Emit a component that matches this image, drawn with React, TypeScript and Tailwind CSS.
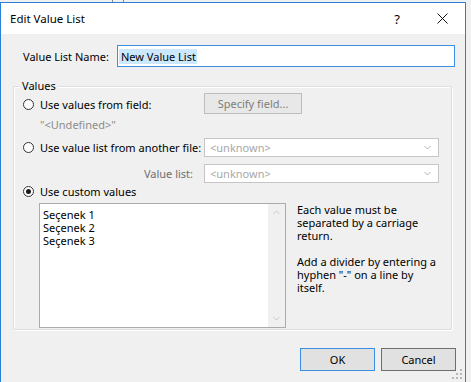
import React from 'react'

function Radio({ checked = false }: { checked?: boolean }) {
  return (
    <span className="w-[11px] h-[11px] rounded-full border border-[#333333] bg-white flex items-center justify-center shrink-0">
      {checked && <span className="w-[5px] h-[5px] rounded-full bg-[#1a1a1a]" />}
    </span>
  )
}

function Dropdown() {
  return (
    <div className="w-[235px] h-[19px] border border-[#c6c6c6] bg-white flex items-center justify-between pl-[5px] pr-[7px] text-[#a8a8a8]">
      <span>&lt;unknown&gt;</span>
      <svg width="7" height="5" viewBox="0 0 7 5">
        <path d="M0.5 1 L3.5 4 L6.5 1" stroke="#b4b4b4" fill="none" />
      </svg>
    </div>
  )
}

function SizeGrip() {
  const dots = [
    [9, 1],
    [5, 5],
    [9, 5],
    [1, 9],
    [5, 9],
    [9, 9],
  ]
  return (
    <svg width="12" height="12" viewBox="0 0 12 12" className="absolute right-[2px] bottom-[2px]">
      {dots.map(([x, y], i) => (
        <rect key={i} x={x} y={y} width="2" height="2" fill="#b8b8b8" />
      ))}
    </svg>
  )
}

export default function App() {
  return (
    <div className="w-[471px] h-[382px] overflow-hidden bg-[#f0f0f0] font-['Noto_Sans',Arial,sans-serif] text-[11px] leading-[13px] text-black">
      {/* strip of the window behind */}
      <div className="h-[2px] flex">
        <span className="ml-[112px] w-[1px] h-[2px] bg-[#8a8a8a]" />
        <span className="ml-[10px] w-[1px] h-[2px] bg-[#8a8a8a]" />
      </div>

      <div className="relative w-[466px] h-[380px] border border-b-0 border-[#2b7fd4] bg-[#f0f0f0]">
        {/* Title bar */}
        <div className="h-[31px] bg-white flex items-center pl-[9px]">
          <span className="text-[11.5px] leading-[14px]">Edit Value List</span>
          <span className="ml-auto mr-[37px] text-[13px] leading-[14px]">?</span>
          <svg width="11" height="11" viewBox="0 0 11 11" className="mr-[17px]">
            <path d="M0.5 0.5 L10.5 10.5 M10.5 0.5 L0.5 10.5" stroke="#111" strokeWidth="1" />
          </svg>
        </div>

        {/* Name row */}
        <div className="flex items-center mt-[11px] pl-[22px]">
          <span className="w-[94px]">Value List Name:</span>
          <div className="w-[338px] h-[22px] border border-[#3c8ee0] bg-white flex items-center pl-[1px]">
            <span className="bg-[#cce8ff] leading-[15px] pl-[2px] pr-[1px]">New Value List</span>
          </div>
        </div>

        {/* Values group */}
        <div className="relative ml-[12px] mt-[19px] w-[439px] border border-[#d9dfe3] rounded-[2px] shadow-[inset_1px_1px_0_#ffffff,1px_1px_0_#ffffff] pt-[6px] pb-[1px]">
          <span className="absolute left-[6px] -top-[8px] px-[2px] bg-[#f0f0f0]">Values</span>

          <div className="flex items-center h-[21px]">
            <div className="w-[190px] pl-[9px] flex items-center gap-[6px] mt-[2px]">
              <Radio />
              <span>Use values from field:</span>
            </div>
            <div className="w-[98px] h-[21px] border border-[#bdbdbd] bg-[#e8e8e8] flex items-center justify-center text-[#7d7d7d]">
              Specify field...
            </div>
          </div>

          <div className="mt-[4px] h-[13px] pl-[26px] text-[#8c8c8c]">"&lt;Undefined&gt;"</div>

          <div className="flex items-center mt-[7px] h-[19px]">
            <div className="w-[190px] pl-[9px] flex items-center gap-[6px]">
              <Radio />
              <span>Use value list from another file:</span>
            </div>
            <Dropdown />
          </div>

          <div className="flex items-center mt-[7px] h-[19px]">
            <div className="w-[190px] pr-[11px] text-right text-[#6f6f6f]">Value list:</div>
            <Dropdown />
          </div>

          <div className="flex items-center mt-[2px] h-[13px] pl-[9px] gap-[6px]">
            <Radio checked />
            <span>Use custom values</span>
          </div>

          <div className="flex mt-[5px]">
            <div className="ml-[25px] w-[247px] h-[125px] border border-[#ababab] bg-white flex">
              <div className="flex-1 pl-[3px] pt-[4px]">
                <div>Seçenek 1</div>
                <div>Seçenek 2</div>
                <div>Seçenek 3</div>
              </div>
              <div className="w-[17px] bg-[#f0f0f0] flex flex-col items-center justify-between py-[6px]">
                <svg width="7" height="5" viewBox="0 0 7 5">
                  <path d="M0.5 4 L3.5 1 L6.5 4" stroke="#c8c8c8" fill="none" />
                </svg>
                <svg width="7" height="5" viewBox="0 0 7 5">
                  <path d="M0.5 1 L3.5 4 L6.5 1" stroke="#c8c8c8" fill="none" />
                </svg>
              </div>
            </div>
            <div className="ml-[11px]">
              <p>
                Each value must be
                <br />
                separated by a carriage
                <br />
                return.
              </p>
              <p className="mt-[13px]">
                Add a divider by entering a
                <br />
                hyphen "-" on a line by
                <br />
                itself.
              </p>
            </div>
          </div>
        </div>

        {/* Buttons */}
        <div className="flex justify-end gap-[6px] mt-[18px] pr-[9px]">
          <button className="w-[75px] h-[23px] border border-[#3c8ee0] bg-[#e1e1e1]">OK</button>
          <button className="w-[75px] h-[23px] border border-[#6e6e6e] bg-[#e1e1e1]">Cancel</button>
        </div>

        <SizeGrip />
      </div>
    </div>
  )
}
